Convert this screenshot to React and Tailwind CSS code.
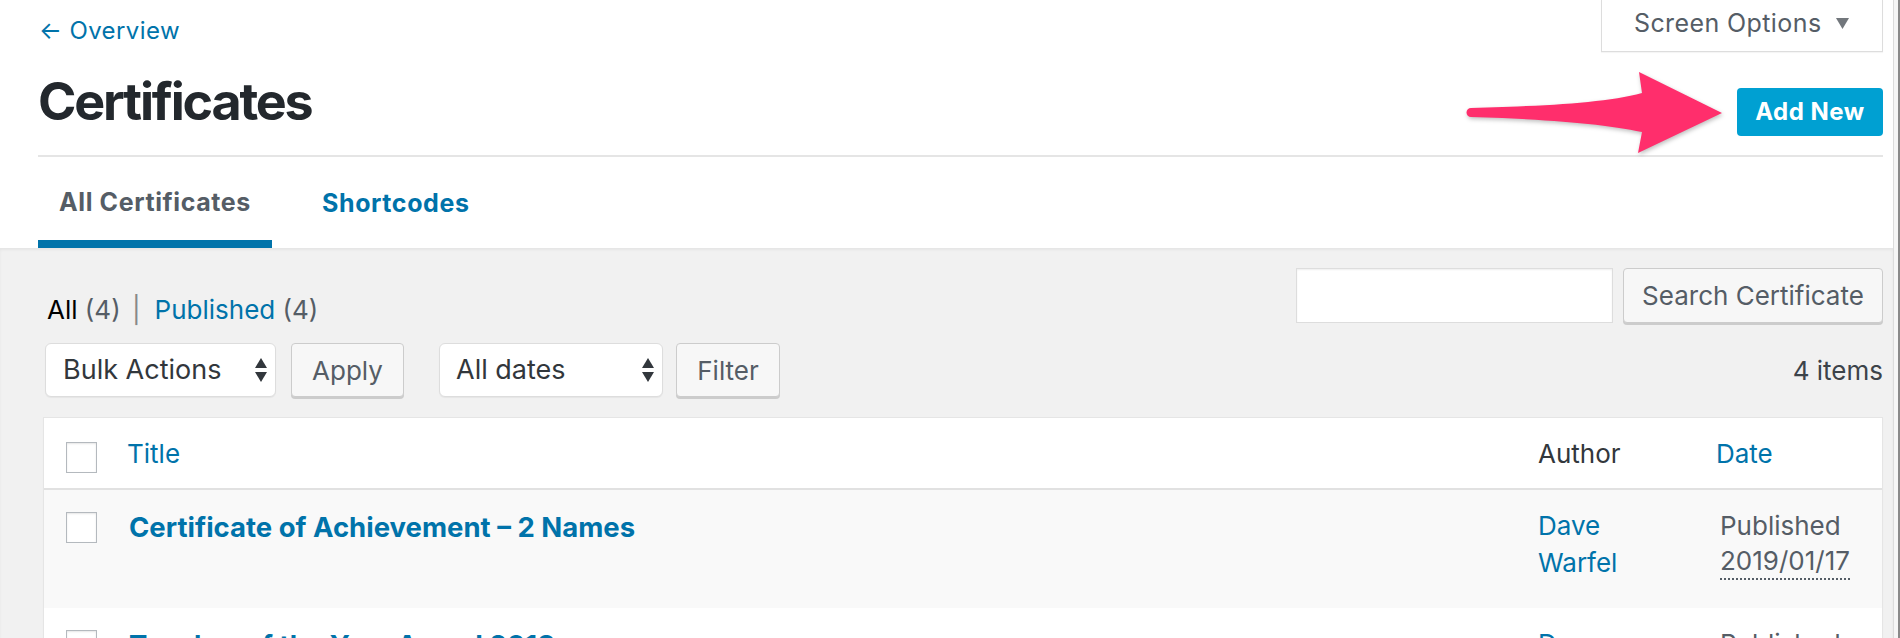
import React from "react";

const Checkbox = ({ className = "" }) => (
  <span
    className={`block w-[31px] h-[31px] border border-[#b4b9be] bg-white shadow-[inset_0_1px_2px_rgba(0,0,0,0.1)] ${className}`}
  />
);

const SelectArrows = () => (
  <svg width="12" height="24" viewBox="0 0 12 24" className="shrink-0">
    <polygon points="6,0 12,10 0,10" fill="#32373c" />
    <polygon points="0,14 12,14 6,24" fill="#32373c" />
  </svg>
);

const rows = [
  { title: "Certificate of Achievement – 2 Names", date: "2019/01/17", bg: "bg-[#f9f9f9]" },
  { title: "Teacher of the Year Award 2018", date: "2019/01/17", bg: "bg-white" },
];

export default function App() {
  return (
    <div className="relative flex min-h-[638px] w-full overflow-hidden bg-[#f1f1f1] font-[Inter,sans-serif] text-[#32373c]">
      <div className="w-[1894px] shrink-0 border-r border-[#dcdcdc]">
        {/* header */}
        <header className="bg-white pl-[38px] pr-[10px]">
          <div className="flex items-start justify-between">
            <a className="mt-[16px] pl-px text-[24px] leading-[30px] tracking-[0.4px] text-[#0073aa]">
              ← Overview
            </a>
            <button className="flex h-[52px] w-[282px] items-center gap-[14px] border border-t-0 border-[#dddddd] bg-white pb-[4px] pl-[32px] text-[25px] tracking-[0.4px] text-[#555d66] shadow-[0_1px_1px_rgba(0,0,0,0.04)]">
              Screen Options
              <svg width="13" height="11" viewBox="0 0 13 11">
                <polygon points="0,0 13,0 6.5,11" fill="#72777c" />
              </svg>
            </button>
          </div>

          <div className="flex items-start justify-between">
            <h1 className="mt-[20px] text-[52px] font-bold leading-[60px] tracking-[-2.2px] text-[#23282d]">
              Certificates
            </h1>
            <button className="mt-[36px] h-[48px] w-[146px] rounded-[4px] bg-[#00a0d2] text-[24px] font-bold tracking-[0.5px] text-white">
              Add New
            </button>
          </div>

          <div className="mt-[19px] h-[2px] bg-[#e5e5e5]" />

          <nav className="flex h-[91px]">
            <a className="flex w-[234px] items-center justify-center border-b-[8px] border-[#0073aa] pt-[8px] text-[25px] font-bold tracking-[0.6px] text-[#555d66]">
              All Certificates
            </a>
            <a className="ml-[30px] flex items-center px-[20px] pt-[2px] text-[25px] font-bold tracking-[0.6px] text-[#0073aa]">
              Shortcodes
            </a>
          </nav>
        </header>

        {/* list */}
        <section className="pl-[43px] pr-[10px] pt-[20px] shadow-[inset_0_2px_3px_rgba(0,0,0,0.05)]">
          <div className="flex items-start justify-between">
            <p className="mt-[27px] pl-[4px] text-[26px] leading-[30px] text-[#555d66]">
              <span className="text-black">All</span> (4) <span className="ml-[4px] mr-[14px] text-[#888]">|</span>
              <span className="text-[#0073aa]">Published</span> (4)
            </p>
            <div className="flex gap-[10px]">
              <span className="block h-[55px] w-[317px] border border-[#dddddd] bg-white shadow-[inset_0_1px_2px_rgba(0,0,0,0.07)]" />
              <button className="h-[55px] w-[260px] rounded-[4px] border border-[#cccccc] bg-[#f7f7f7] text-[26px] text-[#555d66] shadow-[0_2px_0_#cccccc]">
                Search Certificate
              </button>
            </div>
          </div>

          <div className="mt-[18px] flex h-[54px] items-center">
            <div className="ml-[2px] flex h-[54px] w-[231px] items-center justify-between rounded-[6px] border border-[#dddddd] bg-white pl-[17px] pr-[8px] text-[27px] shadow-[0_1px_1px_rgba(0,0,0,0.05)]">
              Bulk Actions
              <SelectArrows />
            </div>
            <button className="ml-[15px] h-[54px] w-[113px] rounded-[4px] border border-[#cccccc] bg-[#f7f7f7] text-[26px] text-[#555d66] shadow-[0_2px_0_#cccccc]">
              Apply
            </button>
            <div className="ml-[35px] flex h-[54px] w-[224px] items-center justify-between rounded-[6px] border border-[#dddddd] bg-white pl-[16px] pr-[8px] text-[27px] shadow-[0_1px_1px_rgba(0,0,0,0.05)]">
              All dates
              <SelectArrows />
            </div>
            <button className="ml-[13px] h-[54px] w-[104px] rounded-[4px] border border-[#cccccc] bg-[#f7f7f7] text-[26px] text-[#555d66] shadow-[0_2px_0_#cccccc]">
              Filter
            </button>
            <span className="ml-auto text-[26px] text-[#3c434a]">4 items</span>
          </div>

          <div className="mt-[20px] border border-[#e5e5e5] bg-white shadow-[0_1px_1px_rgba(0,0,0,0.04)]">
            <div className="flex h-[72px] items-start border-b-2 border-[#e1e1e1] text-[26px] leading-[30px]">
              <div className="w-[83px] pl-[22px] pt-[24px]">
                <Checkbox />
              </div>
              <a className="mt-[21px] flex-1 text-[#0073aa]">Title</a>
              <span className="mt-[21px] w-[178px]">Author</span>
              <a className="mt-[21px] w-[166px] text-[#0073aa]">Date</a>
            </div>

            {rows.map((r) => (
              <div key={r.title} className={`flex h-[118px] items-start ${r.bg}`}>
                <div className="w-[83px] pl-[22px] pt-[22px]">
                  <Checkbox />
                </div>
                <a className="mt-[20px] flex-1 pl-[2px] text-[27.5px] font-bold leading-[34px] text-[#0073aa]">
                  {r.title}
                </a>
                <div className="mt-[17px] flex w-[178px] flex-col text-[26px] leading-[37px] text-[#0073aa]">
                  <span>Dave</span>
                  <span>Warfel</span>
                </div>
                <div className="mt-[17px] flex w-[166px] flex-col items-start pl-[4px] text-[26px] leading-[37px] text-[#555d66]">
                  <span>Published</span>
                  <span className="border-b-2 border-dotted border-[#555d66] leading-[34px]">{r.date}</span>
                </div>
              </div>
            ))}
          </div>
        </section>
      </div>

      <div className="flex w-[6px] justify-end bg-[#f6f6f6]">
        <div className="w-[2px] bg-[#8a8a8a]" />
      </div>

      {/* annotation arrow */}
      <svg
        className="absolute left-[1440px] top-[60px] drop-shadow-[1px_2px_2px_rgba(0,0,0,0.25)]"
        width="300"
        height="110"
        viewBox="1440 60 300 110"
      >
        <path
          d="M1471 108 C1545 106 1605 103 1642 93 L1639 72 L1722 113 L1638 153 L1642 132 C1605 124 1545 119 1471 117 A4.5 4.5 0 0 1 1471 108 Z"
          fill="#ff2e6c"
        />
      </svg>
    </div>
  );
}
